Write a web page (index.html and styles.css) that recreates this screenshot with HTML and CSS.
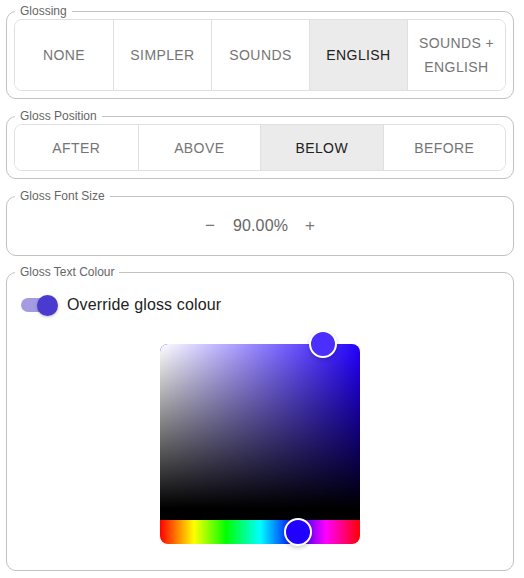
FILE: index.html
```html
<!DOCTYPE html>
<html>
<head>
<meta charset="utf-8">
<link rel="stylesheet" href="styles.css">
</head>
<body>
<div class="page">
  <fieldset class="box">
    <legend>Glossing</legend>
    <div class="group five">
      <button class="tb">None</button>
      <button class="tb">Simpler</button>
      <button class="tb">Sounds</button>
      <button class="tb selected">English</button>
      <button class="tb">Sounds + English</button>
    </div>
  </fieldset>
  <fieldset class="box">
    <legend>Gloss Position</legend>
    <div class="group four">
      <button class="tb">After</button>
      <button class="tb">Above</button>
      <button class="tb selected">Below</button>
      <button class="tb">Before</button>
    </div>
  </fieldset>
  <fieldset class="box">
    <legend>Gloss Font Size</legend>
    <div class="size-row">
      <button class="step">−</button>
      <span class="size-val">90.00%</span>
      <button class="step">+</button>
    </div>
  </fieldset>
  <fieldset class="box colour-box">
    <legend>Gloss Text Colour</legend>
    <label class="switch-row">
      <span class="switch"><span class="track"></span><span class="thumb"></span></span>
      <span class="switch-label">Override gloss colour</span>
    </label>
    <div class="picker">
      <div class="sat">
        <div class="sat-area">
          <div class="pointer sat-ptr"></div>
        </div>
      </div>
      <div class="hue">
        <div class="pointer hue-ptr"></div>
      </div>
    </div>
  </fieldset>
</div>
</body>
</html>
```

FILE: styles.css
```css
* { box-sizing: border-box; }
html, body { margin: 0; padding: 0; background: #fff; }
body { font-family: "Liberation Sans", Arial, sans-serif; }
.page {
  width: 508px;
  margin-left: 6px;
  padding-top: 4px;
  display: flex;
  flex-direction: column;
  gap: 10px;
}
.box {
  margin: 0;
  border: 1px solid #c2c2c2;
  border-radius: 10px;
  padding: 1px 7px 7px;
  min-width: 0;
}
.box.colour-box { margin-top: -1px; }
.box legend {
  font-size: 12px;
  line-height: 14px;
  color: #666;
  padding: 0 5px;
  margin-left: 1px;
}
.group {
  display: grid;
  border: 1px solid #e0e0e0;
  border-radius: 8px;
  overflow: hidden;
}
.group.five { grid-template-columns: repeat(5, 1fr); }
.group.four { grid-template-columns: repeat(4, 1fr); }
.tb {
  font-family: "Liberation Sans", Arial, sans-serif;
  font-size: 14px;
  line-height: 24px;
  letter-spacing: 0.4px;
  text-transform: uppercase;
  color: #757575;
  background: #fff;
  border: 0;
  border-left: 1px solid #e0e0e0;
  padding: 11px 8px 10px;
  margin: 0;
  display: flex;
  align-items: center;
  justify-content: center;
  text-align: center;
}
.group.five .tb { padding: 11px 8px; }
.tb:first-child { border-left: 0; }
.tb.selected { background: #ebebeb; color: #212121; }
.size-row {
  height: 44px;
  display: flex;
  align-items: center;
  justify-content: center;
}
.step {
  font-family: "Liberation Sans", Arial, sans-serif;
  background: none;
  border: 0;
  color: #777;
  font-size: 17px;
  padding: 0;
  width: 24px;
  text-align: center;
  margin-top: -1px;
}
.size-val {
  font-size: 16px;
  color: #666;
  letter-spacing: 0.15px;
  margin: 0 10px 0 11px;
}
.switch-row {
  display: flex;
  align-items: center;
  height: 38px;
  margin-top: 6px;
}
.switch {
  position: relative;
  width: 46px;
  height: 38px;
  flex: none;
}
.track {
  position: absolute;
  left: 7px;
  top: 12px;
  width: 36px;
  height: 14px;
  border-radius: 7px;
  background: #a49be2;
}
.thumb {
  position: absolute;
  left: 23px;
  top: 9px;
  width: 21px;
  height: 21px;
  border-radius: 50%;
  background: #4a3ad0;
  box-shadow: 0 1px 3px rgba(0,0,0,0.25);
}
.switch-label {
  font-size: 16px;
  letter-spacing: 0.15px;
  color: #222;
  margin-left: 7px;
}
.picker {
  width: 200px;
  height: 200px;
  margin: 20px auto 19px;
  display: flex;
  flex-direction: column;
}
.sat {
  position: relative;
  flex: 1;
  border-radius: 8px 8px 0 0;
  border-bottom: 12px solid #000;
  background:
    linear-gradient(to top, #000, rgba(0,0,0,0)),
    linear-gradient(to right, #fff, rgba(255,255,255,0)),
    hsl(248, 100%, 50%);
}
.sat-area { position: absolute; inset: 0; }
.hue {
  position: relative;
  height: 24px;
  flex: none;
  border-radius: 0 0 8px 8px;
  background: linear-gradient(to right, #f00 0%, #ff0 17%, #0f0 33%, #0ff 50%, #00f 67%, #f0f 83%, #f00 100%);
}
.pointer {
  position: absolute;
  width: 28px;
  height: 28px;
  border: 2px solid #fff;
  border-radius: 50%;
  box-shadow: 0 2px 4px rgba(0,0,0,0.2);
  transform: translate(-50%, -50%);
}
.sat-ptr { left: 81.5%; top: 0; background: rgb(75, 47, 255); }
.hue-ptr { left: 69%; top: 50%; background: rgb(34, 0, 255); }
```
